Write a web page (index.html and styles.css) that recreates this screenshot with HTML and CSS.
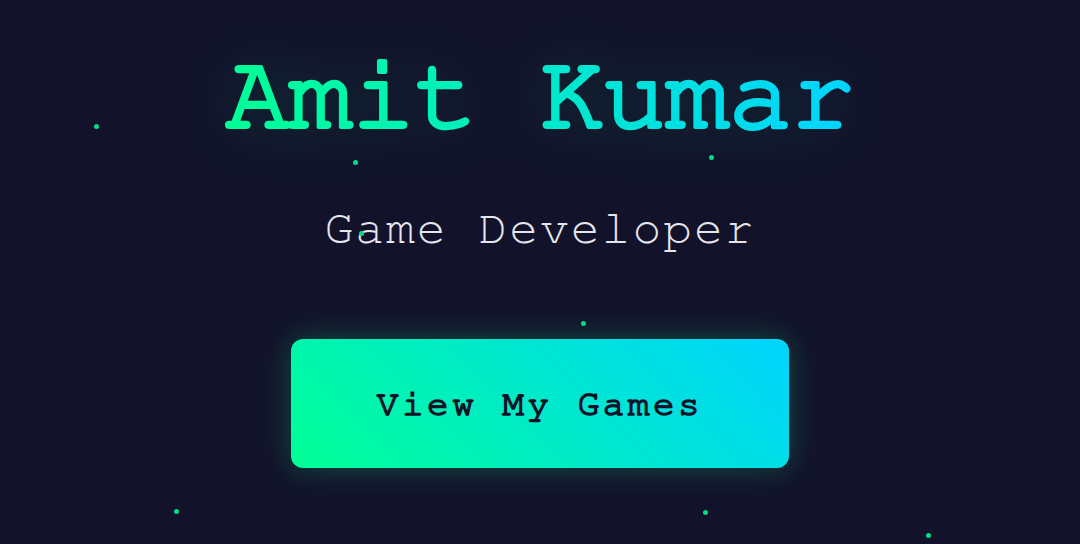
FILE: index.html
```html
<!DOCTYPE html>
<html>
<head>
<meta charset="utf-8">
<link rel="stylesheet" href="styles.css">
</head>
<body>
<div class="particles">
  <span class="dot" style="left:94px;top:124px"></span>
  <span class="dot" style="left:353px;top:160px"></span>
  <span class="dot" style="left:709px;top:155px"></span>
  <span class="dot" style="left:359px;top:231px"></span>
  <span class="dot" style="left:581px;top:321px"></span>
  <span class="dot" style="left:174px;top:509px"></span>
  <span class="dot" style="left:703px;top:510px"></span>
  <span class="dot" style="left:926px;top:533px"></span>
</div>
<main class="hero">
  <h1 class="title">
    <svg class="title-svg" width="720" height="120" viewBox="0 0 720 120" role="img" aria-label="Amit Kumar">
      <defs>
        <linearGradient id="tg" x1="0" y1="0" x2="1" y2="0">
          <stop offset="0" stop-color="#00ff95"/>
          <stop offset="1" stop-color="#00d4ff"/>
        </linearGradient>
      </defs>
      <text class="title-text" x="360" y="97" text-anchor="middle">Amit Kumar</text>
    </svg>
  </h1>
  <p class="subtitle">Game Developer</p>
  <a class="cta" href="#">View My Games</a>
</main>
</body>
</html>
```
FILE: styles.css
```css
html, body {
  margin: 0;
  padding: 0;
  height: 100%;
}
body {
  background: #12132a;
  font-family: FreeMono, "Courier New", monospace;
  overflow: hidden;
  position: relative;
}
.particles {
  position: absolute;
  inset: 0;
  pointer-events: none;
}
.dot {
  position: absolute;
  width: 5px;
  height: 5px;
  border-radius: 50%;
  background: #00dc85;
}
.hero {
  display: flex;
  flex-direction: column;
  align-items: center;
  padding-top: 30px;
}
.title {
  margin: 0;
  line-height: 0;
}
.title-svg {
  display: block;
  overflow: visible;
  filter: drop-shadow(0 0 30px rgba(0, 255, 170, 0.16));
}
.title-text {
  font-family: FreeMono, "Courier New", monospace;
  font-size: 106px;
  font-weight: normal;
  letter-spacing: -0.8px;
  fill: url(#tg);
  stroke: url(#tg);
  stroke-width: 4px;
  stroke-linejoin: round;
}
.subtitle {
  margin: 55px 0 0;
  font-size: 48px;
  color: #e6e6ee;
  letter-spacing: 2px;
}
.cta {
  margin-top: 86px;
  width: 498px;
  height: 129px;
  box-sizing: border-box;
  display: flex;
  align-items: center;
  justify-content: center;
  border-radius: 12px;
  background: linear-gradient(45deg, #00ff95, #00d4ff);
  color: #111428;
  font-size: 36px;
  font-weight: normal;
  -webkit-text-stroke: 1.6px #111428;
  letter-spacing: 3.5px;
  text-decoration: none;
  box-shadow: 0 0 30px rgba(0, 255, 150, 0.25);
}
```
